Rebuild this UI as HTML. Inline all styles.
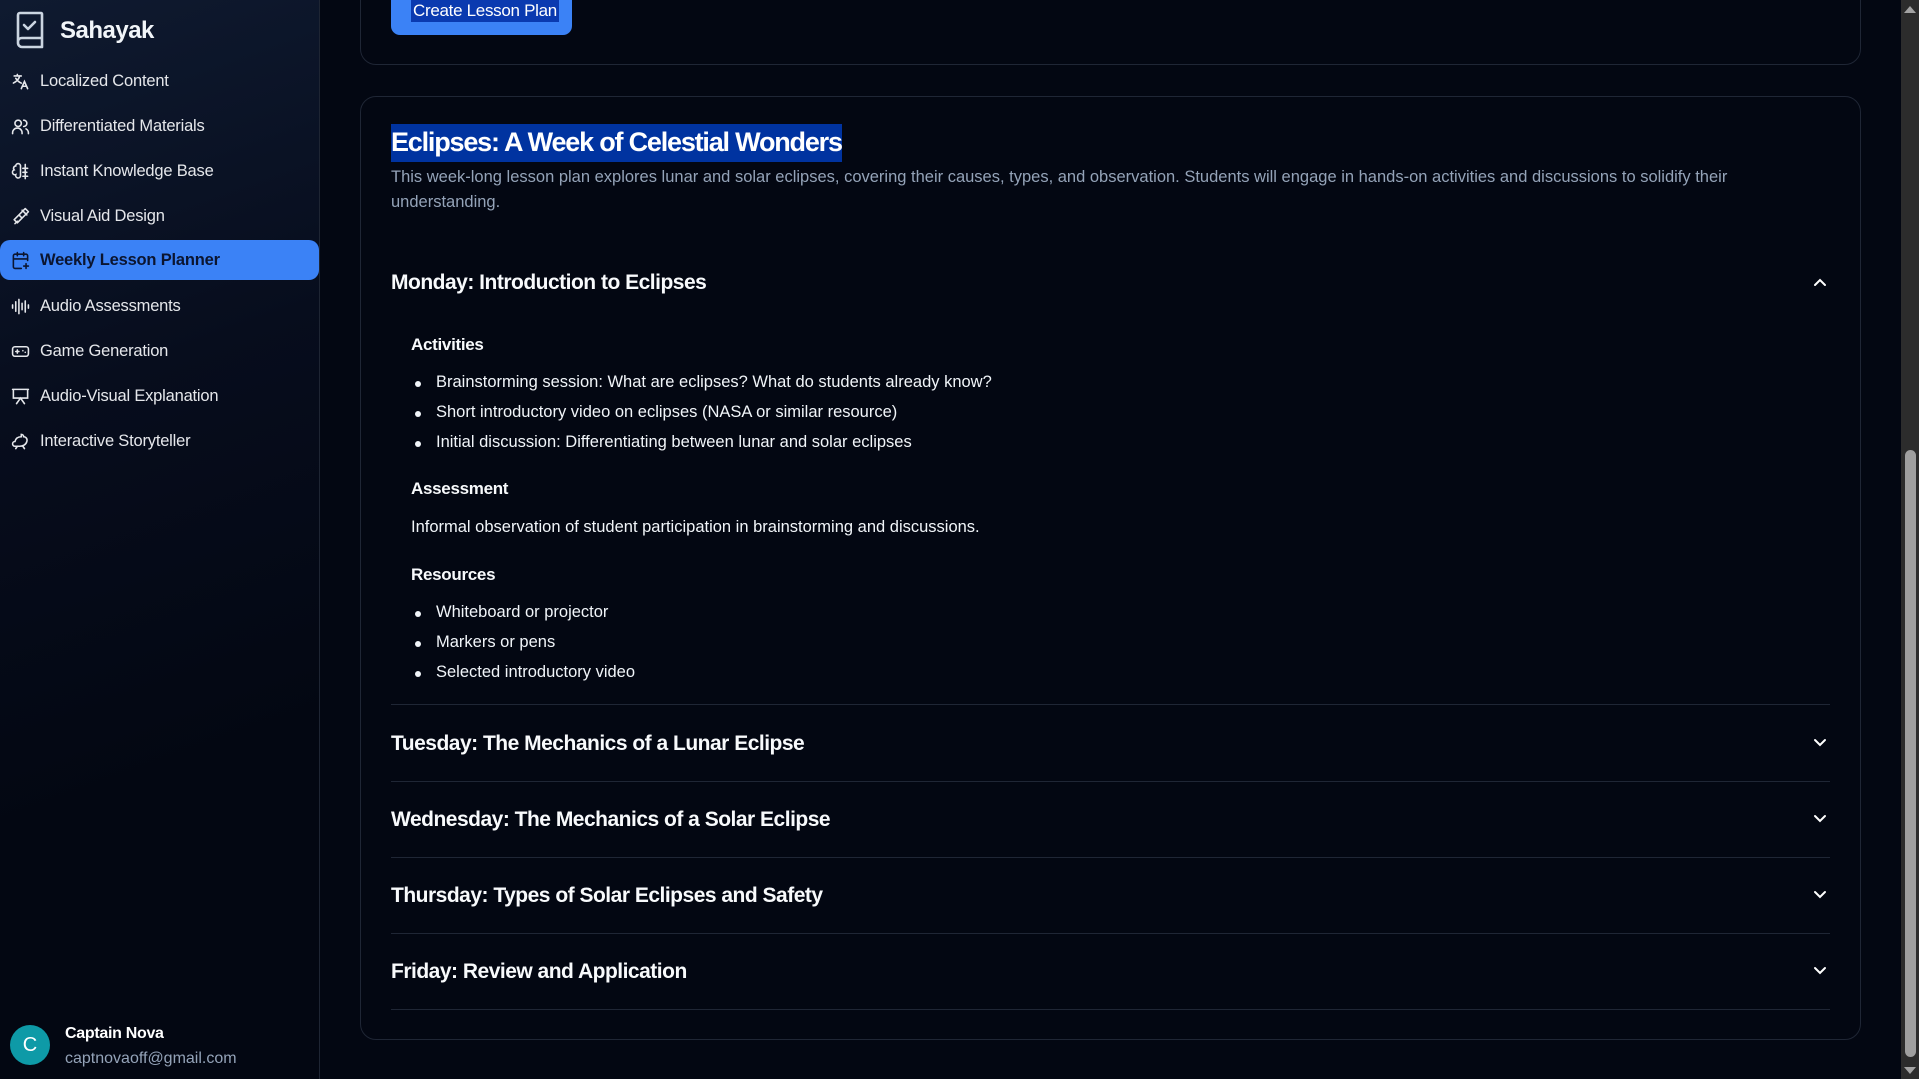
<!DOCTYPE html>
<html><head><meta charset="utf-8"><style>
*{margin:0;padding:0;box-sizing:border-box}
html,body{width:1919px;height:1079px;overflow:hidden;background:#030712;font-family:"Liberation Sans",sans-serif;color:#f1f5f9}
.side{position:absolute;left:0;top:0;width:320px;height:1079px;background:linear-gradient(160deg,#0f1a30 0%,#070d1d 35%,#030712 70%);border-right:1px solid #1e2533}
.logo{position:absolute;left:15px;top:11px;width:30px;height:38px}
.brand{position:absolute;left:60px;top:17px;font-size:24px;font-weight:bold;color:#f1f5f9;letter-spacing:-0.5px}
.item{position:absolute;left:0;width:319px;height:40px;display:flex;align-items:center;font-size:16.5px;color:#e5e7eb;letter-spacing:-0.2px}
.item svg{position:absolute;left:11px;width:19px;height:19px}
.item span{position:absolute;left:40px}
.item.active{background:#3b82f6;border-radius:10px;color:#0b1530;font-weight:bold}
.avatar{position:absolute;left:10px;top:1025px;width:40px;height:40px;border-radius:50%;background:#0e9aa7;color:#fff;font-size:20px;display:flex;align-items:center;justify-content:center}
.uname{position:absolute;left:65px;top:1025px;font-size:16px;font-weight:bold;color:#fff;letter-spacing:-0.3px}
.email{position:absolute;left:65px;top:1050px;font-size:16px;color:#94a3b8}
.card{position:absolute;left:360px;width:1501px;border:1px solid #1f2635;border-radius:16px}
.btn{position:absolute;left:391px;top:-10px;width:181px;height:45px;background:#3b82f6;border-radius:9px}
.btn span{position:absolute;left:20px;top:10px;background:#0a3ab0;color:#fff;font-size:17px;padding:0 2px;line-height:22px;letter-spacing:-0.3px}
.title{position:absolute;left:391px;top:124px;background:#0033a0;color:#fff;font-size:27px;font-weight:bold;padding:2px 0 4px;line-height:32px;letter-spacing:-1.2px}
.desc{position:absolute;left:391px;top:165px;width:1375px;font-size:16.5px;line-height:25px;color:#94a3b8;letter-spacing:0}
.h{position:absolute;left:391px;font-size:21px;font-weight:bold;color:#f8fafc;letter-spacing:-0.5px}
.sub{position:absolute;left:411px;font-size:17px;font-weight:bold;color:#f8fafc;letter-spacing:-0.3px}
.li{position:absolute;left:436px;font-size:16.5px;color:#f1f5f9;letter-spacing:0}
.li:before{content:"";position:absolute;left:-21px;top:8px;width:6px;height:6px;border-radius:50%;background:#f1f5f9}
.p{position:absolute;left:411px;font-size:16.5px;color:#f1f5f9;letter-spacing:0}
.div{position:absolute;left:391px;width:1439px;height:1px;background:#1f2635}
.chev{position:absolute;left:1812px;width:16px;height:10px}
.sb{position:absolute;left:1901px;top:0;width:18px;height:1079px;background:#2c2c2c}
.thumb{position:absolute;left:1905px;top:450px;width:11px;height:607px;background:#9f9f9f;border-radius:6px}
</style></head><body>
<div class="side">
<svg class="logo" viewBox="0 0 30 38" fill="none" stroke="#cbd5e1" stroke-width="2.6" stroke-linecap="round" stroke-linejoin="round"><path d="M3 30V4a2 2 0 0 1 2-2h21a1 1 0 0 1 1 1v33H7a4 4 0 0 1-4-4zM3 30a4 4 0 0 1 4-3h20"/><path d="M9 14l4 4 7-7"/></svg>
<div class="brand">Sahayak</div>

<div class="item" style="top:61px"><svg viewBox="0 0 24 24" fill="none" stroke="#e5e7eb" stroke-width="2" stroke-linecap="round"><path d="M4 5h9M8 3v2M6 8c2 3 4 5 7 6M11 5c-1 4-4 7-8 9M13 21l4-9 4 9M14.5 18h5"/></svg><span>Localized Content</span></div>
<div class="item" style="top:106px"><svg viewBox="0 0 24 24" fill="none" stroke="#e5e7eb" stroke-width="2" stroke-linecap="round"><circle cx="9" cy="8" r="4"/><path d="M2 21v-1a6 6 0 0 1 12 0v1M16 4a4 4 0 0 1 0 8M22 21v-1a6 6 0 0 0-3-5"/></svg><span>Differentiated Materials</span></div>
<div class="item" style="top:151px"><svg viewBox="0 0 24 24" fill="none" stroke="#e5e7eb" stroke-width="2" stroke-linecap="round"><path d="M12 5a3 3 0 1 0-6 0 3 3 0 0 0-2 5 3 3 0 0 0 2 6 3 3 0 0 0 6 2V5M15 8h6M15 13h5M18 3v18M15 18h6"/></svg><span>Instant Knowledge Base</span></div>
<div class="item" style="top:196px"><svg viewBox="0 0 24 24" fill="none" stroke="#e5e7eb" stroke-width="2" stroke-linecap="round" stroke-linejoin="round"><path d="M18 2l4 4-8 8-4-4zM10 10l-6 6 4 4 6-6M5 21l3-3M14 4l6 6"/></svg><span>Visual Aid Design</span></div>
<div class="item active" style="top:240px"><svg viewBox="0 0 24 24" fill="none" stroke="#0b1530" stroke-width="2" stroke-linecap="round"><path d="M21 12V6a2 2 0 0 0-2-2H5a2 2 0 0 0-2 2v14a2 2 0 0 0 2 2h8M3 10h18M8 2v4M16 2v4M19 16v6M16 19h6"/></svg><span>Weekly Lesson Planner</span></div>
<div class="item" style="top:286px"><svg viewBox="0 0 24 24" fill="none" stroke="#e5e7eb" stroke-width="2" stroke-linecap="round"><path d="M2 10v4M6 6v12M10 3v18M14 8v8M18 5v14M22 10v4"/></svg><span>Audio Assessments</span></div>
<div class="item" style="top:331px"><svg viewBox="0 0 24 24" fill="none" stroke="#e5e7eb" stroke-width="2" stroke-linecap="round"><rect x="2" y="6" width="20" height="12" rx="3"/><path d="M6 12h4M8 10v4M15 11h.01M18 13h.01"/></svg><span>Game Generation</span></div>
<div class="item" style="top:376px"><svg viewBox="0 0 24 24" fill="none" stroke="#e5e7eb" stroke-width="2" stroke-linecap="round"><path d="M2 3h20M3 3v11h18V3M7 21l5-7 5 7"/></svg><span>Audio-Visual Explanation</span></div>
<div class="item" style="top:421px"><svg viewBox="0 0 24 24" fill="none" stroke="#e5e7eb" stroke-width="2" stroke-linecap="round"><path d="M13 3a3 3 0 0 1 3 3c3 0 5 3 4 6-1 4-5 6-9 6H5a3 3 0 0 1 0-6c1-4 4-6 8-6V3zM8 18l-2 3M15 18l2 3"/></svg><span>Interactive Storyteller</span></div>

<div class="avatar">C</div>
<div class="uname">Captain Nova</div>
<div class="email">captnovaoff@gmail.com</div>
</div>

<div class="card" style="top:-40px;height:105px"></div>
<div class="btn"><span>Create Lesson Plan</span></div>

<div class="card" style="top:96px;height:944px"></div>
<div class="title">Eclipses: A Week of Celestial Wonders</div>
<div class="desc">This week-long lesson plan explores lunar and solar eclipses, covering their causes, types, and observation. Students will engage in hands-on activities and discussions to solidify their understanding.</div>

<div class="h" style="top:271px">Monday: Introduction to Eclipses</div>
<svg class="chev" style="top:277px" viewBox="0 0 16 10" fill="none" stroke="#fff" stroke-width="2" stroke-linecap="round"><path d="M3 8l5-5 5 5"/></svg>

<div class="sub" style="top:335px">Activities</div>
<div class="li" style="top:373px">Brainstorming session: What are eclipses? What do students already know?</div>
<div class="li" style="top:403px">Short introductory video on eclipses (NASA or similar resource)</div>
<div class="li" style="top:433px">Initial discussion: Differentiating between lunar and solar eclipses</div>
<div class="sub" style="top:479px">Assessment</div>
<div class="p" style="top:518px">Informal observation of student participation in brainstorming and discussions.</div>
<div class="sub" style="top:565px">Resources</div>
<div class="li" style="top:603px">Whiteboard or projector</div>
<div class="li" style="top:633px">Markers or pens</div>
<div class="li" style="top:663px">Selected introductory video</div>
<div class="div" style="top:704px"></div>

<div class="h" style="top:732px">Tuesday: The Mechanics of a Lunar Eclipse</div>
<svg class="chev" style="top:738px" viewBox="0 0 16 10" fill="none" stroke="#fff" stroke-width="2" stroke-linecap="round"><path d="M3 2l5 5 5-5"/></svg>
<div class="div" style="top:781px"></div>
<div class="h" style="top:808px">Wednesday: The Mechanics of a Solar Eclipse</div>
<svg class="chev" style="top:814px" viewBox="0 0 16 10" fill="none" stroke="#fff" stroke-width="2" stroke-linecap="round"><path d="M3 2l5 5 5-5"/></svg>
<div class="div" style="top:857px"></div>
<div class="h" style="top:884px">Thursday: Types of Solar Eclipses and Safety</div>
<svg class="chev" style="top:890px" viewBox="0 0 16 10" fill="none" stroke="#fff" stroke-width="2" stroke-linecap="round"><path d="M3 2l5 5 5-5"/></svg>
<div class="div" style="top:933px"></div>
<div class="h" style="top:960px">Friday: Review and Application</div>
<svg class="chev" style="top:966px" viewBox="0 0 16 10" fill="none" stroke="#fff" stroke-width="2" stroke-linecap="round"><path d="M3 2l5 5 5-5"/></svg>
<div class="div" style="top:1009px"></div>

<div class="sb"></div>
<svg style="position:absolute;left:1903px;top:4px" width="14" height="10"><path d="M1 9L7 2l6 7z" fill="#a3a3a3"/></svg>
<div class="thumb"></div>
<svg style="position:absolute;left:1903px;top:1066px" width="14" height="10"><path d="M1 1l6 7 6-7z" fill="#a3a3a3"/></svg>
</body></html>
